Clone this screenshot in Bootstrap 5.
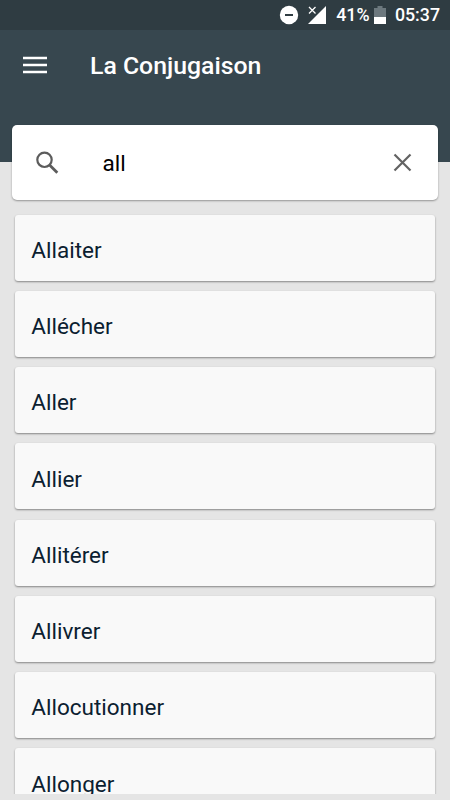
<!DOCTYPE html>
<html lang="fr">
<head>
<meta charset="utf-8">
<meta name="viewport" content="width=device-width, initial-scale=1">
<title>La Conjugaison</title>
<link href="https://cdn.jsdelivr.net/npm/bootstrap@5.3.0/dist/css/bootstrap.min.css" rel="stylesheet">
<style>
  body { font-family: Roboto, "Noto Sans", sans-serif; background: #e5e5e5; color: #0b2030; }
  .screen { height: 800px; }
  .top-block { height: 162px; background: #37474f; }
  .status-bar { height: 30px; background: #2f3c42; font-size: 17.8px; font-weight: 500; line-height: 32px; padding-right: 10px; }
  .status-bar .battery-text { margin-left: 9px; }
  .status-bar .clock { margin-left: 7.4px; line-height: 32px; }
  .app-bar { height: 72px; padding-left: 23px; }
  .menu-icon { margin-bottom: 2px; }
  .app-title { font-size: 24.8px; font-weight: 500; line-height: 32px; margin-left: 43px; }
  .search-box { height: 75px; margin: -37px 12.5px 0 12px; border: 0; border-radius: 5px; box-shadow: 0 1px 2px rgba(0,0,0,.36); padding: 0 24px 0 22px; }
  .search-box input { font-size: 22.5px; line-height: 30px; height: 30px; color: #000; margin-left: 42.5px; min-width: 0; }
  .verb-area { height: 594px; padding: 14.7px 14.8px 0; gap: 10.25px; }
  .verb { height: 66px; flex: none; border: 0; border-radius: 3px; background: #f9f9f9; color: #0b2030; font-size: 22.5px; line-height: 30px; padding: 4.5px 16.5px 0; box-shadow: 0 1px 2px rgba(0,0,0,.42); }
</style>
<script src="https://cdn.jsdelivr.net/npm/bootstrap@5.3.0/dist/js/bootstrap.bundle.min.js"></script>
</head>
<body>
<div class="screen d-flex flex-column overflow-hidden">
  <header class="top-block flex-shrink-0 text-white">
    <div class="status-bar d-flex align-items-center justify-content-end">
      <svg width="20" height="20" viewBox="0 0 20 20"><circle cx="10" cy="10" r="9.200" fill="#fff"/><path d="M6 10h8" stroke="#2f3c42" stroke-width="2"/></svg>
      <svg class="ms-2" width="20" height="20" viewBox="0 0 20 20"><path d="M19 1v18H1z" fill="#fff"/><path d="M1 1h9v9H1z" fill="#2f3c42"/><path d="M2 2l6.500 6.500M8.500 2L2 8.500" stroke="#fff" stroke-width="1.300"/></svg>
      <span class="battery-text">41%</span>
      <svg class="ms-1" width="14" height="20" viewBox="0 0 14 20"><path d="M4.500 1h5v2H13v9H1V3h3.500z" fill="#6c787e"/><path d="M1 12h12v7H1z" fill="#fff"/></svg>
      <span class="clock">05:37</span>
    </div>
    <nav class="app-bar d-flex align-items-center">
      <svg class="menu-icon" width="24" height="18" viewBox="0 0 24 18" stroke="#fff" stroke-width="2.500"><path d="M0 2h24M0 9h24M0 16h24"/></svg>
      <h1 class="app-title mb-0">La Conjugaison</h1>
    </nav>
  </header>
  <div class="search-box card flex-row align-items-center flex-shrink-0">
    <svg width="26" height="26" viewBox="0 0 26 26" fill="none" stroke="#5c5c5c"><circle cx="10.500" cy="9.800" r="7.200" stroke-width="2.200"/><path d="M15.600 15L23.300 22.700" stroke-width="2.800"/></svg>
    <input class="flex-grow-1 border-0 p-0 bg-transparent" type="text" value="all" aria-label="Verbe">
    <svg width="22" height="22" viewBox="0 0 22 22" stroke="#626262" stroke-width="2.200"><path d="M2.500 2.500l16 16M18.500 2.500l-16 16"/></svg>
  </div>
  <main class="verb-area d-flex flex-column overflow-hidden">
    <div class="verb card justify-content-center">Allaiter</div>
    <div class="verb card justify-content-center">Allécher</div>
    <div class="verb card justify-content-center">Aller</div>
    <div class="verb card justify-content-center">Allier</div>
    <div class="verb card justify-content-center">Allitérer</div>
    <div class="verb card justify-content-center">Allivrer</div>
    <div class="verb card justify-content-center">Allocutionner</div>
    <div class="verb card justify-content-center">Allonger</div>
  </main>
</div>
</body>
</html>
